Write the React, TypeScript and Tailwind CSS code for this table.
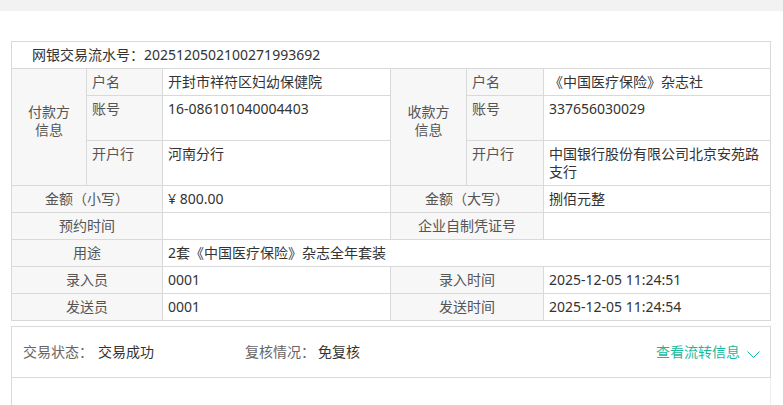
import React from "react";

const LABEL = "bg-[#f7f7f7] text-[#555] px-[5px] pt-[4px] leading-[18px]";
const LABEL_C = "bg-[#f7f7f7] text-[#555] pt-[4px] leading-[18px] text-center col-span-2";
const VAL = "bg-white text-[#333] px-[5px] pt-[4px] leading-[18px]";

export default function App() {
  return (
    <div
      className="w-[783px] min-h-[405px] bg-white text-[14px]"
      style={{ fontFamily: '"Noto Sans", "Noto Sans CJK SC", sans-serif' }}
    >
      <div className="h-[11px] bg-[#f2f2f2]" />
      <div className="pl-[11px] pt-[30px]">
        <div className="grid w-[760px] grid-cols-[74px_75px_227px_75px_76px_226px] grid-rows-[26px_26px_44px_44px_26px_26px_26px_26px_26px] gap-px border border-[#d9d9d9] bg-[#d9d9d9]">
          <div className="col-span-6 bg-white pl-[20px] pt-[4px] leading-[18px] text-[#333]">
            网银交易流水号：2025120502100271993692
          </div>

          <div className="row-span-3 flex items-center justify-center bg-[#f7f7f7] pb-[12px] text-center leading-[18px] text-[#555]">
            <div>
              付款方
              <br />
              信息
            </div>
          </div>
          <div className={LABEL}>户名</div>
          <div className={VAL}>开封市祥符区妇幼保健院</div>
          <div className="row-span-3 flex items-center justify-center bg-[#f7f7f7] pb-[12px] text-center leading-[18px] text-[#555]">
            <div>
              收款方
              <br />
              信息
            </div>
          </div>
          <div className={LABEL}>户名</div>
          <div className={VAL}>《中国医疗保险》杂志社</div>

          <div className={LABEL}>账号</div>
          <div className={VAL}>16-086101040004403</div>
          <div className={LABEL}>账号</div>
          <div className={VAL}>337656030029</div>

          <div className={LABEL}>开户行</div>
          <div className={VAL}>河南分行</div>
          <div className={LABEL}>开户行</div>
          <div className={VAL}>中国银行股份有限公司北京安苑路支行</div>

          <div className={LABEL_C}>金额（小写）</div>
          <div className={VAL}>¥ 800.00</div>
          <div className={LABEL_C}>金额（大写）</div>
          <div className={VAL}>捌佰元整</div>

          <div className={LABEL_C}>预约时间</div>
          <div className={VAL}></div>
          <div className={LABEL_C}>企业自制凭证号</div>
          <div className={VAL}></div>

          <div className={LABEL_C}>用途</div>
          <div className={`${VAL} col-span-4`}>2套《中国医疗保险》杂志全年套装</div>

          <div className={LABEL_C}>录入员</div>
          <div className={VAL}>0001</div>
          <div className={LABEL_C}>录入时间</div>
          <div className={VAL}>2025-12-05 11:24:51</div>

          <div className={LABEL_C}>发送员</div>
          <div className={VAL}>0001</div>
          <div className={LABEL_C}>发送时间</div>
          <div className={VAL}>2025-12-05 11:24:54</div>
        </div>

        <div className="mt-[5px] flex h-[52px] w-[760px] items-center border border-[#d9d9d9] pl-[11px] pr-[10px] leading-[18px]">
          <div className="flex w-[222px]">
            <span className="text-[#666]">交易状态：</span>
            <span className="ml-[5px] text-[#333]">交易成功</span>
          </div>
          <div className="flex">
            <span className="text-[#666]">复核情况：</span>
            <span className="ml-[3px] text-[#333]">免复核</span>
          </div>
          <div className="ml-auto flex items-center text-[#1bb99a]">
            <span>查看流转信息</span>
            <svg
              className="ml-[7px] mt-[4px]"
              width="13"
              height="7"
              viewBox="0 0 13 7"
              fill="none"
            >
              <polyline
                points="0.5,0.5 6.5,6.5 12.5,0.5"
                stroke="#1bb99a"
                strokeWidth="1"
              />
            </svg>
          </div>
        </div>
        <div className="h-[28px] w-[760px] border-l border-r border-l-[#d9d9d9] border-r-[#eeeeee]" />
      </div>
    </div>
  );
}
